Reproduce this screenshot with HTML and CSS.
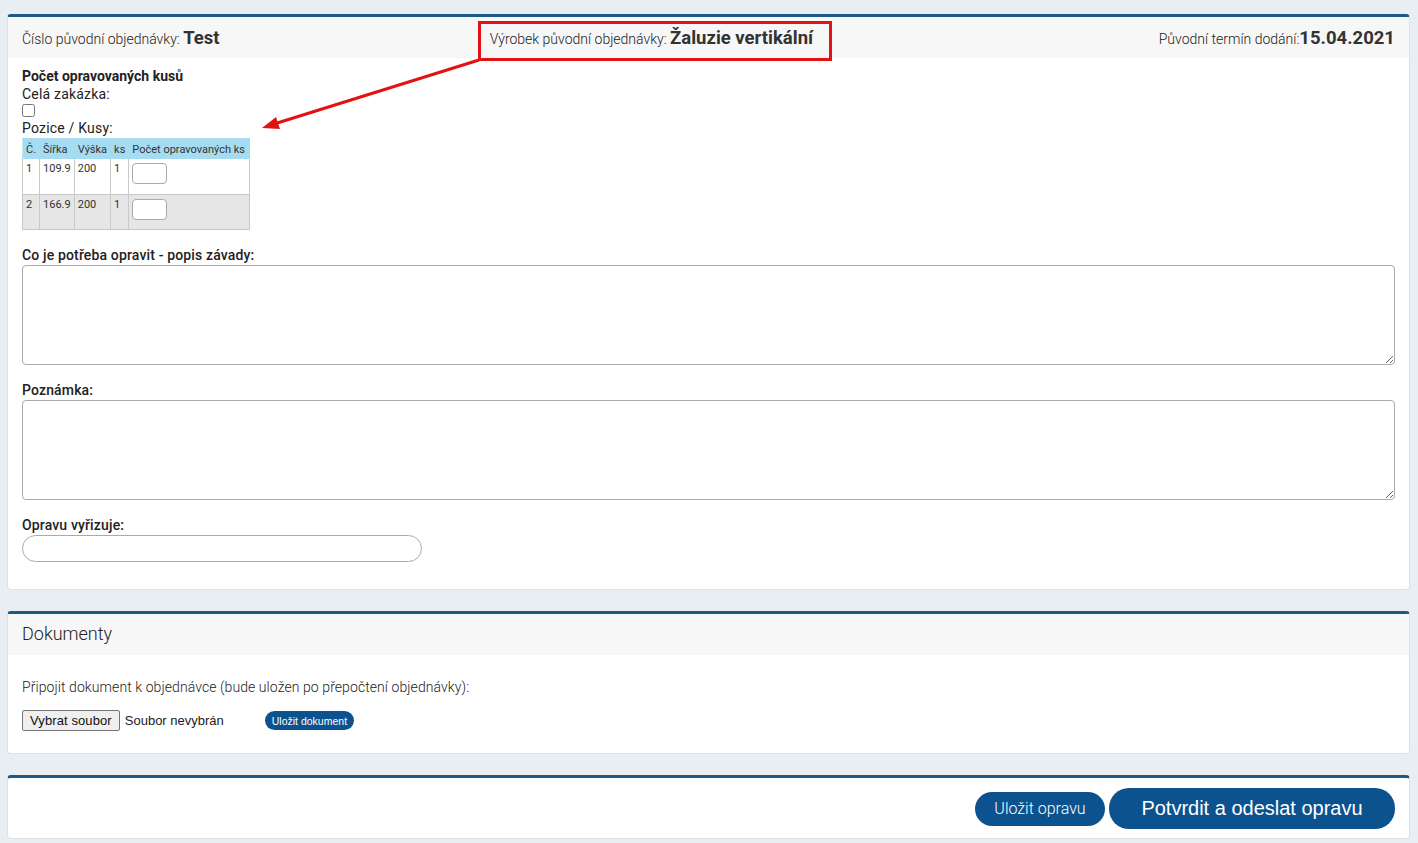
FILE: index.html
```html
<!doctype html>
<html lang="cs">
<head>
	<meta charset="UTF-8">
	<title>Oprava objednávky</title>
	<link rel="stylesheet" href="styles.css">
</head>
<body>
<div class="page">
	<div class="card card_repair">
		<div class="card_head head_grid">
			<div class="head_item">Číslo původní objednávky: <b>Test</b></div>
			<div class="head_item">Výrobek původní objednávky: <b>Žaluzie vertikální</b></div>
			<div class="head_item head_right">Původní termín dodání:<b>15.04.2021</b></div>
		</div>
		<div class="card_body">
			<div class="sub_title">Počet opravovaných kusů</div>
			<div class="lbl lbl_plain">Celá zakázka:</div>
			<input type="checkbox" class="chk">
			<div class="lbl lbl_plain">Pozice / Kusy:</div>
			<table class="pos_table">
				<tr>
					<th>Č.</th><th>Šířka</th><th>Výška</th><th>ks</th><th>Počet opravovaných ks</th>
				</tr>
				<tr class="first">
					<td>1</td><td>109.9</td><td>200</td><td>1</td><td><input type="text" class="pcs"></td>
				</tr>
				<tr class="odd">
					<td>2</td><td>166.9</td><td>200</td><td>1</td><td><input type="text" class="pcs"></td>
				</tr>
			</table>

			<div class="field">
				<div class="lbl">Co je potřeba opravit - popis závady:</div>
				<textarea class="area"></textarea>
			</div>
			<div class="field">
				<div class="lbl">Poznámka:</div>
				<textarea class="area"></textarea>
			</div>
			<div class="field">
				<div class="lbl">Opravu vyřizuje:</div>
				<input type="text" class="round_input">
			</div>
		</div>
	</div>

	<div class="card card_docs">
		<div class="card_head docs_title">Dokumenty</div>
		<div class="card_body docs_body">
			<div class="docs_text">Připojit dokument k objednávce (bude uložen po přepočtení objednávky):</div>
			<div class="file_row">
				<span class="file_btn">Vybrat soubor</span>
				<span class="file_name">Soubor nevybrán</span>
				<span class="btn btn_small">Uložit dokument</span>
			</div>
		</div>
	</div>

	<div class="card card_actions">
		<span class="btn btn_mid">Uložit opravu</span>
		<span class="btn btn_big">Potvrdit a odeslat opravu</span>
	</div>

	<!-- red annotation over the screenshot -->
	<svg class="annot" width="1418" height="843" viewBox="0 0 1418 843">
		<rect x="479.5" y="22.5" width="351" height="37" fill="none" stroke="#e31212" stroke-width="3"/>
		<line x1="479" y1="60" x2="274" y2="124" stroke="#e31212" stroke-width="3"/>
		<polygon points="262,128 276,117 280,129" fill="#e31212"/>
	</svg>
</div>
</body>
</html>
```

FILE: styles.css
```css
html,body{margin: 0;padding: 0;}
body{
	background-color: #e9eef3;
	font-family: Roboto, 'Liberation Sans', sans-serif;
	color: #222;
}
.page{
	position: relative;
	padding: 14px 8px 4px 7px;
}
.card{
	background-color: #fff;
	border: 1px solid #dde2e7;
	border-top: 3px solid #1c5a86;
	border-radius: 4px;
}
.card + .card{margin-top: 21px;}
.card_head{
	height: 41px;
	background-color: #f7f7f7;
	padding: 0 14px;
}
.head_grid{
	display: grid;
	grid-template-columns: 1fr 1fr 1fr;
	align-items: center;
	font-size: 14px;
	font-weight: 300;
}
.head_item b{
	font-size: 18.5px;
	font-weight: 700;
	color: #333;
}
.head_item:nth-child(2){padding-left: 10px;}
.head_right{text-align: right;}
.card_body{padding: 9px 14px 27px;}
.sub_title{
	font-size: 14px;
	font-weight: 700;
	line-height: 18px;
}
.lbl{
	font-size: 14px;
	font-weight: 500;
	line-height: 18px;
	letter-spacing: 0.15px;
	color: #222;
}
.lbl_plain{
	font-weight: 400;
	letter-spacing: 0.2px;
}
.chk{
	display: block;
	width: 13px;
	height: 13px;
	margin: 1px 0 2px;
}
.pos_table{
	border-collapse: collapse;
	font-size: 11px;
	color: #333;
	margin-top: 1px;
}
.pos_table th{
	background-color: #a6dcf2;
	font-weight: 400;
	text-align: left;
	padding: 3px 3px 2px;
	height: 14px;
	border: 1px solid #a6dcf2;
	border-left-color: #c7e7f3;
}
.pos_table th:last-child{padding-right: 4px;}
.pos_table td{
	vertical-align: top;
	padding: 3px 3px 9px;
	border: 1px solid #c9c9c9;
}
.pos_table tr.first td{padding-bottom: 10px;}
.pos_table tr.odd td{background-color: #e6e6e6;}
.pcs{
	display: block;
	width: 35px;
	height: 21px;
	box-sizing: border-box;
	margin-top: 1px;
	border: 1px solid #aaa;
	border-radius: 4px;
	background: #fff;
}
.field{margin-top: 16px;}
.area{
	display: block;
	box-sizing: border-box;
	width: 100%;
	height: 100px;
	border: 1px solid #aaa;
	border-radius: 4px;
	margin-top: 1px;
}
.round_input{
	display: block;
	box-sizing: border-box;
	width: 400px;
	height: 27px;
	border: 1px solid #aaa;
	border-radius: 14px;
	margin-top: 1px;
}
.docs_title{
	display: flex;
	align-items: center;
	font-size: 18px;
	font-weight: 300;
	color: #222;
	padding-bottom: 2px;
	height: 39px;
}
.docs_body{padding: 23px 14px 22px;}
.docs_text{
	font-size: 14px;
	font-weight: 300;
	line-height: 18px;
	letter-spacing: 0.08px;
}
.file_row{
	display: flex;
	align-items: center;
	margin-top: 14px;
	font-size: 13px;
}
.file_btn{
	font-family: 'Liberation Sans', Arial, sans-serif;
	display: inline-block;
	padding: 1px 7px;
	line-height: 17px;
	background-color: #efefef;
	border: 1px solid #767676;
	border-radius: 2px;
	color: #111;
	letter-spacing: 0.1px;
}
.file_name{
	font-family: 'Liberation Sans', Arial, sans-serif;
	margin-left: 5px;
	width: 140px;
	color: #222;
}
.btn{
	display: inline-flex;
	align-items: center;
	justify-content: center;
	background-color: #0c528f;
	color: #fff;
	border-radius: 20px;
	font-family: 'Liberation Sans', Arial, sans-serif;
}
.btn_small{
	height: 19px;
	padding: 0 7px;
	font-size: 10.5px;
}
.card_actions{
	display: flex;
	justify-content: flex-end;
	align-items: center;
	gap: 4px;
	padding: 10px 14px 9px;
}
.btn_mid{
	width: 130px;
	height: 34px;
	font-size: 16px;
	font-family: Roboto, 'Liberation Sans', sans-serif;
	font-weight: 300;
}
.btn_big{
	width: 286px;
	height: 41px;
	font-size: 20px;
}
.annot{
	position: absolute;
	left: 0;
	top: 0;
	pointer-events: none;
}
```
